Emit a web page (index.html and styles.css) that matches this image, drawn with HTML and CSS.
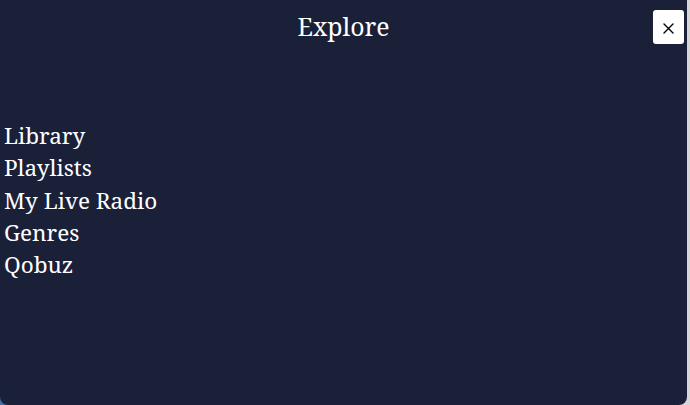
FILE: index.html
```html
<!DOCTYPE html>
<html lang="en">
<head>
<meta charset="utf-8">
<title>Explore</title>
<link rel="stylesheet" href="styles.css">
</head>
<body>
<div class="panel">
  <header class="head">
    <h1 class="title">Explore</h1>
    <button class="close" type="button" aria-label="Close">
      <svg class="close-icon" width="11" height="11" viewBox="0 0 11 11" aria-hidden="true">
        <path d="M1 1 L10 10 M10 1 L1 10" stroke="#000" stroke-width="1.4" fill="none" stroke-linecap="round"/>
      </svg>
    </button>
  </header>
  <nav class="menu">
    <a class="item" href="#">Library</a>
    <a class="item" href="#">Playlists</a>
    <a class="item" href="#">My Live Radio</a>
    <a class="item" href="#">Genres</a>
    <a class="item" href="#">Qobuz</a>
  </nav>
</div>
</body>
</html>
```
FILE: styles.css
```css
html, body {
  margin: 0;
  height: 100%;
}
body {
  background: linear-gradient(90deg, #3f6fa8 0 50%, #d6d6d6 50% 100%);
  font-family: "Noto Serif", "DejaVu Serif", serif;
  overflow: hidden;
}
.panel {
  width: 687px;
  height: 405px;
  box-sizing: border-box;
  background: #1b2039;
  border-radius: 0 0 8px 8px;
  color: #ffffff;
  display: flex;
  flex-direction: column;
}
.head {
  position: relative;
  padding-top: 9px;
  display: flex;
  justify-content: center;
}
.title {
  margin: 0;
  font-size: 24.8px;
  line-height: 34px;
  font-weight: normal;
}
.close {
  position: absolute;
  top: 10px;
  right: 3px;
  width: 31px;
  height: 34px;
  padding: 0;
  border: none;
  border-radius: 3px;
  background: #ffffff;
  display: flex;
  align-items: center;
  justify-content: center;
}
.close-icon {
  display: block;
  margin-top: 2px;
}
.menu {
  display: flex;
  flex-direction: column;
  padding: 0 0 0 4px;
  margin-top: 77px;
}
.item {
  color: #ffffff;
  text-decoration: none;
  font-size: 22.5px;
  line-height: 32.25px;
}
```
